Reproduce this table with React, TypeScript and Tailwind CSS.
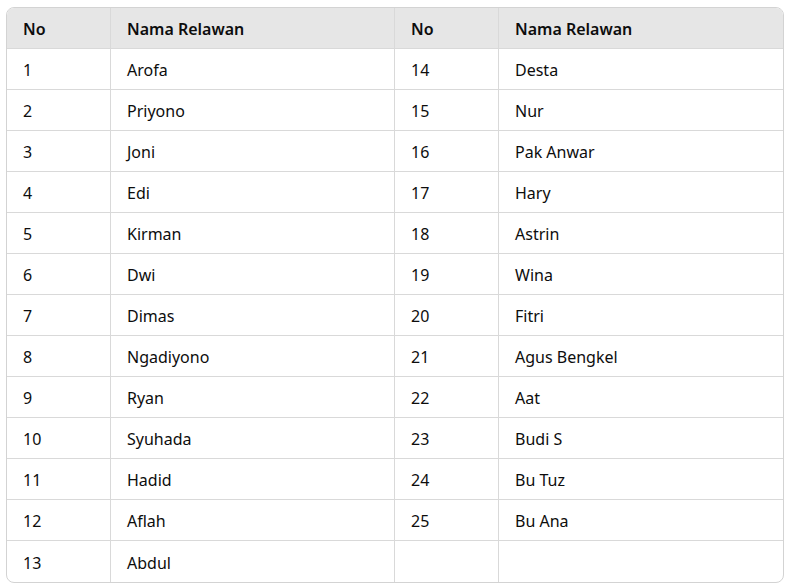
import React from "react";

const left = ["Arofa","Priyono","Joni","Edi","Kirman","Dwi","Dimas","Ngadiyono","Ryan","Syuhada","Hadid","Aflah","Abdul"];
const right = ["Desta","Nur","Pak Anwar","Hary","Astrin","Wina","Fitri","Agus Bengkel","Aat","Budi S","Bu Tuz","Bu Ana"];

export default function App() {
  const rows = left.map((n, i) => [String(i + 1), n, right[i] ? String(i + 14) : "", right[i] ?? ""]);
  const cell = "h-[41px] flex items-center pl-4 pt-[2px] border-[#d9d9d9]";
  return (
    <div className="w-[791px] h-[588px] bg-white pt-[7px] pl-[6px]" style={{ fontFamily: '"Noto Sans", "Open Sans", sans-serif' }}>
      <div className="w-[778px] border border-[#d3d3d3] rounded-lg overflow-hidden text-[16px] text-[#0d0d0d]">
        <div className="grid grid-cols-[104px_284px_104px_1fr]">
          {["No", "Nama Relawan", "No", "Nama Relawan"].map((h, j) => (
            <div key={j} className={`${cell} h-[40px] bg-[#e6e6e6] font-semibold border-b ${j < 3 ? "border-r" : ""}`}>{h}</div>
          ))}
          {rows.map((r, i) =>
            r.map((c, j) => (
              <div key={`${i}-${j}`} className={`${cell} ${i < rows.length - 1 ? "border-b" : "h-[40px]"} ${j < 3 ? "border-r" : ""}`}>{c}</div>
            ))
          )}
        </div>
      </div>
    </div>
  );
}
